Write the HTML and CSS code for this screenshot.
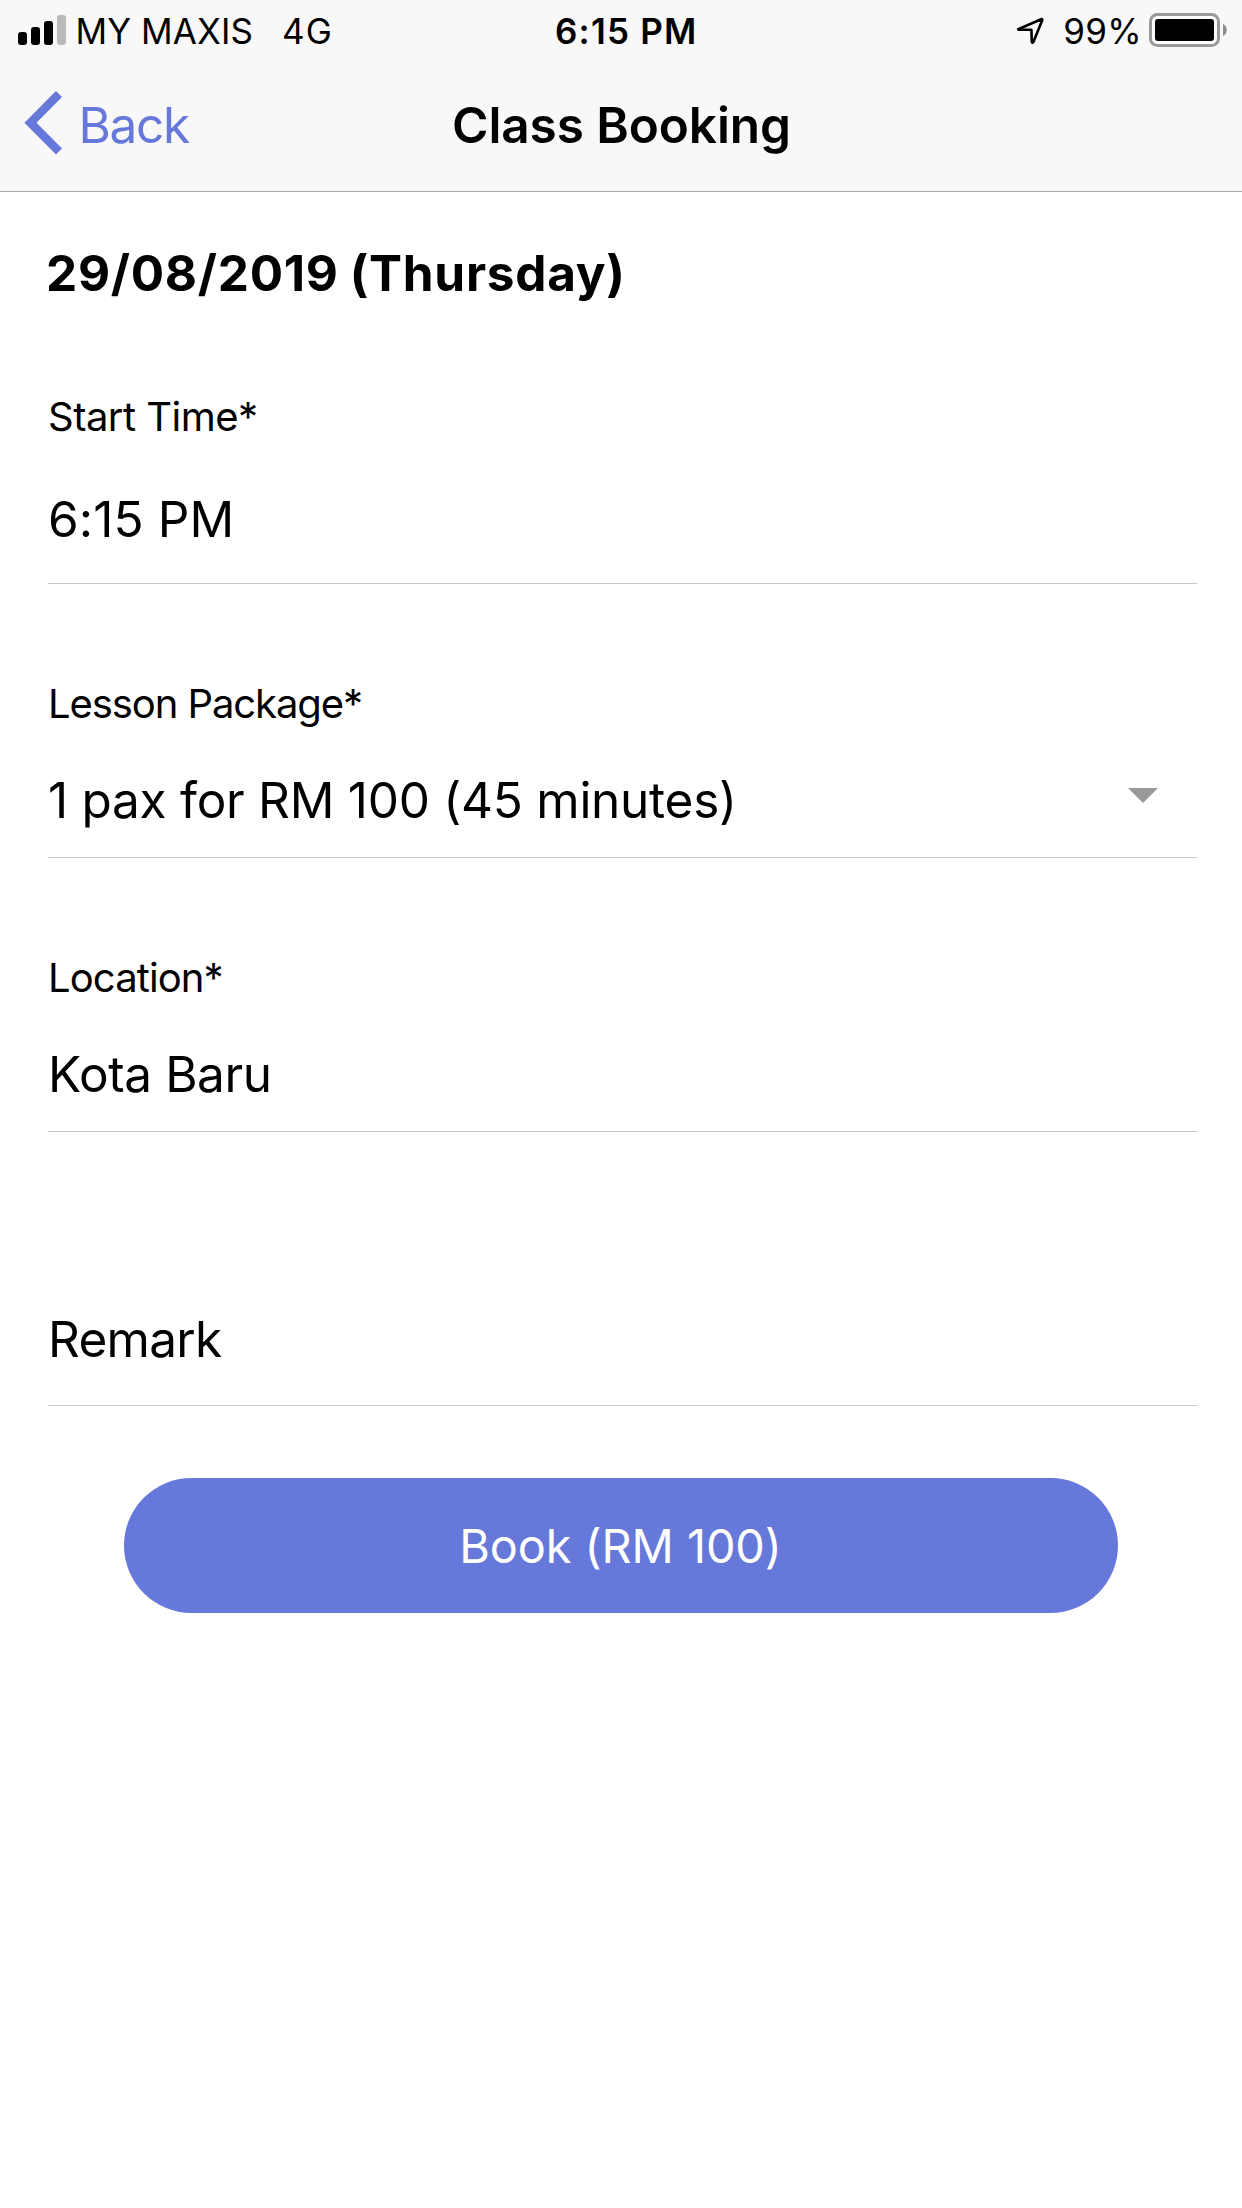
FILE: index.html
```html
<!DOCTYPE html>
<html lang="en">
<head>
<meta charset="utf-8">
<title>Class Booking</title>
<link rel="stylesheet" href="styles.css">
</head>
<body>
<header class="header">
  <div class="status">
    <div class="status-left">
      <svg class="signal" width="48" height="30" viewBox="0 0 48 30" aria-hidden="true">
        <rect x="0" y="17" width="9" height="13" rx="3"/>
        <rect x="13" y="12" width="9" height="18" rx="3"/>
        <rect x="26" y="6" width="9" height="24" rx="3"/>
        <rect x="39" y="0" width="9" height="30" rx="3" fill="#bababa"/>
      </svg>
      <span class="carrier">MY MAXIS</span>
      <span class="network">4G</span>
    </div>
    <div class="clock">6:15 PM</div>
    <div class="status-right">
      <svg class="location" width="30" height="30" viewBox="0 0 30 30" aria-hidden="true">
        <path d="M3.2 13.2 26.2 3.2Q27.4 2.8 27.2 4.2L18.4 26Q17.2 27.6 16.8 25.8L16.4 13.8 3.6 13.8Z" fill="none" stroke="#000" stroke-width="2.6" stroke-linejoin="round"/>
      </svg>
      <span class="percent">99%</span>
      <svg class="battery" width="78" height="34" viewBox="0 0 78 34" aria-hidden="true">
        <rect x="1.5" y="1.5" width="68" height="31" rx="7" fill="#fdfdfd" stroke="#999" stroke-width="3"/>
        <rect x="6" y="6" width="59" height="22" rx="3"/>
        <path d="M74 11c5 2 5 10 0 12z" fill="#8c8c8c"/>
      </svg>
    </div>
  </div>
  <nav class="nav">
    <a class="back">
      <svg width="38" height="64" viewBox="0 0 38 64" aria-hidden="true">
        <path d="M35 3 6.5 31.7 35 60.5" fill="none" stroke="#6778db" stroke-width="8.6"/>
      </svg>
      <span>Back</span>
    </a>
    <h1 class="title">Class Booking</h1>
  </nav>
</header>
<main class="form">
  <h2 class="date">29/08/2019 (Thursday)</h2>
  <section class="field start">
    <div class="label">Start Time*</div>
    <div class="value">6:15 PM</div>
  </section>
  <section class="field package">
    <div class="label">Lesson Package*</div>
    <div class="value select">
      <span>1 pax for RM 100 (45 minutes)</span>
      <svg class="caret" width="30" height="15" viewBox="0 0 30 15" aria-hidden="true"><path d="M0 0h30L15 15z" fill="#999"/></svg>
    </div>
  </section>
  <section class="field place">
    <div class="label">Location*</div>
    <div class="value">Kota Baru</div>
  </section>
  <section class="field remark">
    <div class="value">Remark</div>
  </section>
  <button class="book">Book (RM 100)</button>
</main>
</body>
</html>
```
FILE: styles.css
```css
* { box-sizing: border-box; }

body {
  margin: 0;
  min-height: 2208px;
  background: #fff;
  color: #000;
  font-family: Inter, "Liberation Sans", sans-serif;
  font-size: 49.5px;
  white-space: nowrap;
}

.header {
  height: 192px;
  background: #f8f8f8;
  border-bottom: 1px solid #acacac;
}

.status {
  display: grid;
  grid-template-columns: 537px 1fr auto;
  height: 62px;
  padding: 0 15px 0 18px;
  font-size: 35px;
  line-height: 62px;
}

.status-left, .status-right { display: flex; }

.signal { margin-top: 15px; }
.carrier { margin-left: 9.5px; letter-spacing: 0.11px; }
.network { margin-left: 29px; letter-spacing: 1px; }
.clock { font-weight: 600; letter-spacing: 1.2px; }
.location { margin: 16px 18px 0 0; }
.percent { letter-spacing: 0.3px; }
.battery { margin: 13px 0 0 7px; }

.nav {
  display: grid;
  grid-template-columns: 428px 1fr;
  height: 126px;
  padding-left: 24px;
  line-height: 126px;
}

.back {
  display: flex;
  gap: 16.5px;
  color: #6778db;
  letter-spacing: -1.3px;
}

.back svg { margin-top: 29px; }

.title {
  margin: 0;
  font-size: inherit;
  font-weight: 600;
  letter-spacing: -0.09px;
}

.form {
  display: flex;
  flex-direction: column;
  padding: 51px 45px 0 48px;
}

.date {
  margin: 0 0 90px -2px;
  font-size: inherit;
  font-weight: 700;
  line-height: 60px;
  letter-spacing: 0.73px;
  word-spacing: -1.5px;
}

.field {
  display: flex;
  flex-direction: column;
  border-bottom: 1px solid #c8c8c8;
}

.label { font-size: 40px; line-height: 48px; }
.value { line-height: 60px; }

.start { gap: 48px; padding-bottom: 34px; margin-bottom: 96px; }
.start .label { letter-spacing: -0.53px; }
.start .value { letter-spacing: 0.13px; }

.package { gap: 42px; padding-bottom: 27px; margin-bottom: 96px; }
.package .label { letter-spacing: -1.08px; }
.package .value { letter-spacing: -0.26px; }

.select { display: flex; justify-content: space-between; }
.caret { margin: 18px 39px 0 0; }

.place { gap: 42px; padding-bottom: 27px; margin-bottom: 177px; }
.place .label { letter-spacing: -0.9px; }
.place .value { letter-spacing: -0.4px; }

.remark { padding-bottom: 36px; }
.remark .value { letter-spacing: -0.7px; }

.book {
  width: 994px;
  height: 135px;
  margin: 72px 0 0 76px;
  padding: 0 1px 0 0;
  border: 0;
  border-radius: 68px;
  background: #6778db;
  color: #fff;
  font-family: inherit;
  font-size: 46.8px;
  letter-spacing: -0.05px;
}
```
